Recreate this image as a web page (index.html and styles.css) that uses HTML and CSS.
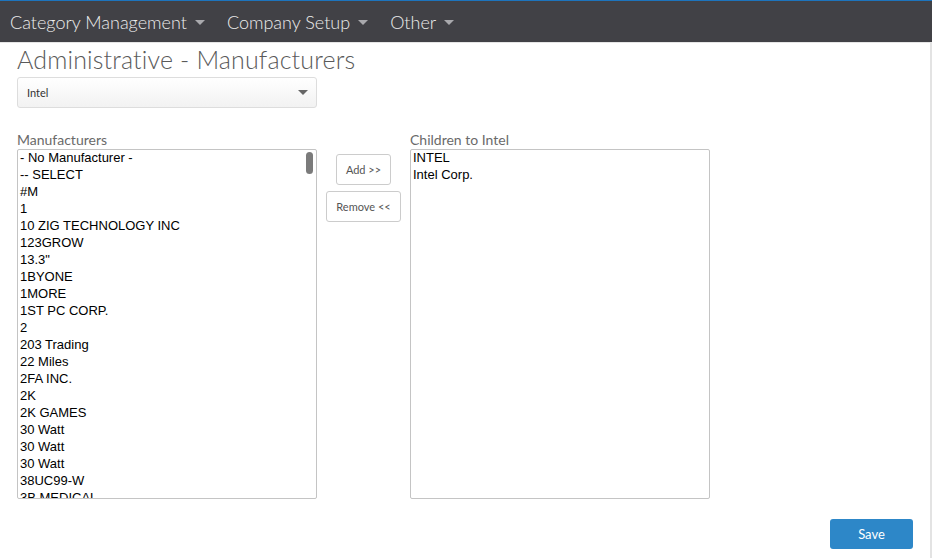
FILE: index.html
```html
<!DOCTYPE html>
<html lang="en">
<head>
  <meta charset="UTF-8">
  <meta name="viewport" content="width=device-width, initial-scale=1.0">
  <title>Administrative - Manufacturers</title>
  <link rel="stylesheet" href="styles.css">
</head>
<body>
  <nav class="navbar">
    <a class="nav-item">Category Management <span class="caret"></span></a>
    <a class="nav-item">Company Setup <span class="caret"></span></a>
    <a class="nav-item">Other <span class="caret"></span></a>
  </nav>

  <div class="page">
    <h1>Administrative - Manufacturers</h1>

    <div class="parent-select">
      <span>Intel</span>
      <span class="select-caret"></span>
    </div>

    <div class="lists">
      <div class="list-col">
        <label>Manufacturers</label>
        <div class="listbox">
          <div class="option">- No Manufacturer -</div>
          <div class="option">-- SELECT</div>
          <div class="option">#M</div>
          <div class="option">1</div>
          <div class="option">10 ZIG TECHNOLOGY INC</div>
          <div class="option">123GROW</div>
          <div class="option">13.3"</div>
          <div class="option">1BYONE</div>
          <div class="option">1MORE</div>
          <div class="option">1ST PC CORP.</div>
          <div class="option">2</div>
          <div class="option">203 Trading</div>
          <div class="option">22 Miles</div>
          <div class="option">2FA INC.</div>
          <div class="option">2K</div>
          <div class="option">2K GAMES</div>
          <div class="option">30 Watt</div>
          <div class="option">30 Watt</div>
          <div class="option">30 Watt</div>
          <div class="option">38UC99-W</div>
          <div class="option">3B MEDICAL</div>
          <div class="scroll-thumb"></div>
        </div>
      </div>

      <div class="move-buttons">
        <button class="btn">Add &gt;&gt;</button>
        <button class="btn">Remove &lt;&lt;</button>
      </div>

      <div class="list-col">
        <label>Children to Intel</label>
        <div class="listbox">
          <div class="option">INTEL</div>
          <div class="option">Intel Corp.</div>
        </div>
      </div>
    </div>

    <div class="actions">
      <button class="btn-save">Save</button>
    </div>
  </div>
</body>
</html>
```

FILE: styles.css
```css
* {
  box-sizing: border-box;
}

body {
  margin: 0;
  font-family: Lato, 'Open Sans', sans-serif;
  background: #fff;
  color: #555;
}

.navbar {
  display: flex;
  align-items: center;
  height: 43px;
  padding-left: 10px;
  background: #414146;
  border-top: 1px solid #1d74bd;
  border-bottom: 1px solid #e5e5e5;
}

.nav-item {
  display: flex;
  align-items: center;
  margin-right: 22px;
  font-size: 18px;
  color: #ececec;
  font-weight: 300;
}

.caret {
  display: inline-block;
  width: 0;
  height: 0;
  margin-left: 8px;
  margin-top: 2px;
  border-left: 5px solid transparent;
  border-right: 5px solid transparent;
  border-top: 5px solid #a9a9ad;
}

.page {
  width: 932px;
  height: 515px;
  padding: 0 17px;
  border-right: 2px solid #e3e3e3;
}

h1 {
  margin: 0;
  padding-top: 1px;
  font-size: 25px;
  letter-spacing: 0.15px;
  font-weight: 300;
  color: #5a5a5a;
  line-height: 30px;
}

.parent-select {
  display: flex;
  align-items: center;
  justify-content: space-between;
  width: 300px;
  height: 31px;
  margin-top: 3px;
  padding: 0 9px;
  border: 1px solid #ddd;
  border-radius: 3px;
  background: linear-gradient(#fff, #f2f2f2);
  font-size: 11px;
  color: #333;
}

.select-caret {
  width: 0;
  height: 0;
  margin-right: -1px;
  border-left: 5px solid transparent;
  border-right: 5px solid transparent;
  border-top: 5px solid #666;
}

.lists {
  display: flex;
  margin-top: 22px;
}

.list-col {
  width: 300px;
}

.list-col label {
  display: block;
  font-size: 14px;
  line-height: 19px;
  color: #6a6a6a;
}

.listbox {
  position: relative;
  height: 350px;
  overflow: hidden;
  border: 1px solid #c4c4c4;
  border-radius: 2px;
  padding: 0 2px;
  font-family: 'Liberation Sans', Arial, sans-serif;
  font-size: 13px;
  line-height: 17px;
  color: #000;
}

.option:first-child {
  margin-top: -1px;
}

.scroll-thumb {
  position: absolute;
  top: 2px;
  right: 3px;
  width: 7px;
  height: 22px;
  border-radius: 4px;
  background: #7b7b7b;
}

.move-buttons {
  display: flex;
  flex-direction: column;
  align-items: center;
  gap: 6px;
  width: 93px;
  padding-top: 24px;
}

.btn {
  height: 31px;
  padding: 0 9px;
  border: 1px solid #ccc;
  border-radius: 3px;
  background: #fff;
  font-family: Lato, 'Open Sans', sans-serif;
  font-size: 11px;
  color: #555;
}

.actions {
  display: flex;
  justify-content: flex-end;
  margin-top: 20px;
}

.btn-save {
  width: 83px;
  height: 30px;
  border: none;
  border-radius: 3px;
  background: #2d87c8;
  color: #fff;
  font-family: Lato, 'Open Sans', sans-serif;
  font-size: 13px;
}
```
